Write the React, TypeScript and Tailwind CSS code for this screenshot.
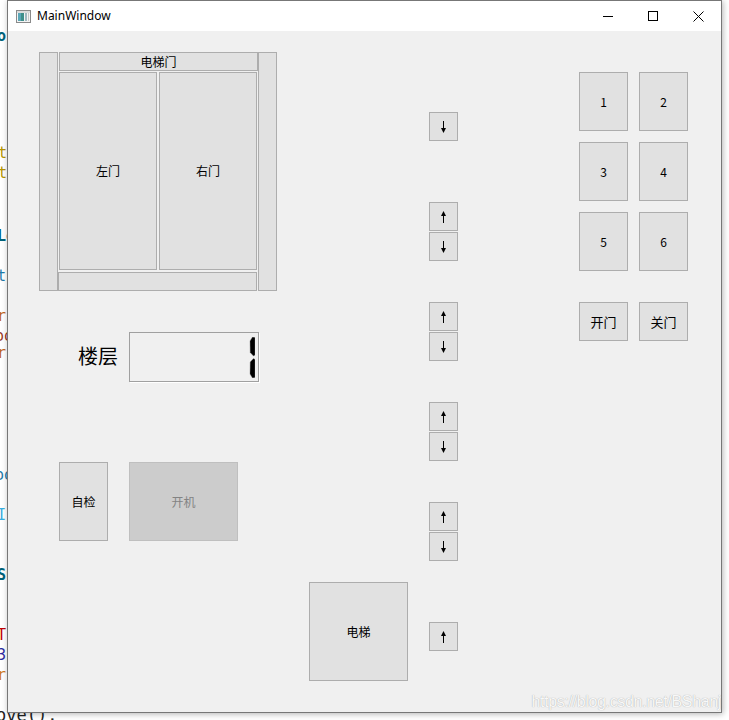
import React from "react";

function Btn({ className = "", children }: { className?: string; children?: React.ReactNode }) {
  return (
    <div
      className={
        "flex shrink-0 items-center justify-center border border-[#adadad] bg-[#e1e1e1] text-[12px] leading-none text-black " +
        className
      }
    >
      {children}
    </div>
  );
}

function ArrowUp() {
  return (
    <svg width="7" height="12" viewBox="0 0 7 12" shapeRendering="crispEdges">
      <rect x="3" y="2" width="1" height="10" fill="#000" />
      <polygon points="3.5,0 6,5 1,5" fill="#000" shapeRendering="geometricPrecision" />
    </svg>
  );
}

function ArrowDown() {
  return (
    <svg width="7" height="12" viewBox="0 0 7 12" shapeRendering="crispEdges">
      <rect x="3" y="0" width="1" height="10" fill="#000" />
      <polygon points="1,7 6,7 3.5,12" fill="#000" shapeRendering="geometricPrecision" />
    </svg>
  );
}

function Arrow({ up, className = "" }: { up?: boolean; className?: string }) {
  return <Btn className={"h-[29px] w-[29px] " + className}>{up ? <ArrowUp /> : <ArrowDown />}</Btn>;
}

function Digit1() {
  return (
    <svg width="6" height="41" viewBox="0 0 6 41">
      <polygon points="3.5,0 6,0.5 6,18 4.5,19 1.2,15.5 1,4" fill="#000" stroke="#777" strokeWidth="0.4" />
      <polygon points="4.5,21.5 6,22.5 6,40.5 3.5,41 1,37 1.2,25" fill="#000" stroke="#777" strokeWidth="0.4" />
    </svg>
  );
}

function WinIcon() {
  return (
    <svg width="15" height="13" viewBox="0 0 15 13">
      <rect x="0.5" y="0.5" width="14" height="12" fill="#f4f4f4" stroke="#8a8a8a" />
      <rect x="1" y="1" width="13" height="2" fill="#dcdcdc" />
      <rect x="2" y="3" width="6" height="8" fill="#3f8f8a" />
      <rect x="2" y="3" width="3" height="8" fill="#5aa7b8" />
      <rect x="9" y="3" width="2" height="8" fill="#9fb8c0" />
      <rect x="12" y="3" width="1" height="8" fill="#c8c8c8" />
    </svg>
  );
}

export default function App() {
  return (
    <div className="relative h-[720px] w-[729px] overflow-hidden bg-white font-['Noto_Sans_CJK_SC','Noto_Sans',sans-serif]">
      {/* background editor fragments */}
      <div className="absolute left-0 top-0 h-full w-[20px] font-['DejaVu_Sans_Mono',monospace] text-[15px] leading-none">
        <span className="absolute left-[-3px] top-[29px] font-bold text-[#00627a]">or</span>
        <span className="absolute left-[-2px] top-[146px] text-[#b59400]">ti</span>
        <span className="absolute left-[-2px] top-[166px] text-[#b59400]">ti</span>
        <span className="absolute left-[-3px] top-[229px] font-bold text-[#00627a]">Lo</span>
        <span className="absolute left-[-3px] top-[269px] text-[#1f7aa8]">tE</span>
        <span className="absolute left-[-3px] top-[309px] text-[#c0651c]">r</span>
        <span className="absolute left-[-5px] top-[329px] text-[#9a3b1f]">oo</span>
        <span className="absolute left-[-3px] top-[346px] text-[#c0651c]">r</span>
        <span className="absolute left-[-5px] top-[468px] text-[#1f7aa8]">oo</span>
        <span className="absolute left-[-3px] top-[508px] text-[#3aaee0]">I(</span>
        <span className="absolute left-[-3px] top-[568px] font-bold text-[#00627a]">Su</span>
        <span className="absolute left-[-3px] top-[628px] text-[#c00000]">T</span>
        <span className="absolute left-[-3px] top-[648px] text-[#2a2aa0]">3</span>
        <span className="absolute left-[-3px] top-[668px] text-[#d07a20]">r</span>
      </div>
      <span className="absolute left-[-4px] top-[707px] font-['DejaVu_Sans_Mono',monospace] text-[17px] leading-none text-[#222]">
        ove().
      </span>

      {/* window */}
      <div className="relative z-10 ml-[7px] flex h-[713px] w-[715px] flex-col border border-[#777777] shadow-[1px_1px_6px_rgba(0,0,0,0.3)]">
        {/* title bar */}
        <div className="flex h-[30px] shrink-0 items-center bg-white">
          <div className="ml-[8px] flex items-center">
            <WinIcon />
            <span className="ml-[6px] font-['Noto_Sans',sans-serif] text-[12px] text-black">MainWindow</span>
          </div>
          <div className="ml-auto flex h-full">
            <div className="flex h-full w-[46px] items-center justify-center">
              <div className="ml-[4px] h-[1px] w-[10px] bg-black" />
            </div>
            <div className="flex h-full w-[46px] items-center justify-center">
              <div className="ml-[2px] h-[10px] w-[10px] border border-black" />
            </div>
            <div className="flex h-full w-[46px] items-center justify-center">
              <svg width="11" height="11" viewBox="0 0 11 11" className="ml-[1px]">
                <path d="M0.5 0.5 L10.5 10.5 M10.5 0.5 L0.5 10.5" stroke="#000" strokeWidth="1" />
              </svg>
            </div>
          </div>
        </div>

        {/* client area */}
        <div className="flex flex-1 items-start bg-[#f0f0f0]">
          {/* column A */}
          <div className="ml-[31px] flex w-[238px] shrink-0 flex-col">
            <div className="mt-[21px] flex h-[239px]">
              <div className="h-full w-[19px] border border-[#adadad] bg-[#e1e1e1]" />
              <div className="flex w-[200px] flex-col">
                <Btn className="ml-[1px] h-[19px] w-[199px]">电梯门</Btn>
                <div className="ml-[1px] mt-[1px] flex gap-[2px]">
                  <Btn className="h-[198px] w-[98px]">左门</Btn>
                  <Btn className="h-[198px] w-[98px]">右门</Btn>
                </div>
                <div className="mt-[2px] h-[19px] w-[199px] border border-[#adadad] bg-[#e1e1e1]" />
              </div>
              <div className="h-full w-[19px] border border-[#adadad] bg-[#e1e1e1]" />
            </div>

            <div className="mt-[41px] flex items-center">
              <div className="w-[79px] pb-[2px] text-right text-[20px] leading-none text-black">楼层</div>
              <div className="ml-[11px] flex h-[50px] w-[130px] items-center justify-end border border-[#a0a0a0] pr-[3px] shadow-[1px_1px_0_#ffffff]">
                <Digit1 />
              </div>
            </div>

            <div className="mt-[80px] flex">
              <Btn className="ml-[20px] h-[79px] w-[49px]">自检</Btn>
              <div className="ml-[21px] flex h-[79px] w-[109px] items-center justify-center border border-[#bfbfbf] bg-[#cccccc] text-[12px] leading-none text-[#838383]">
                开机
              </div>
            </div>
          </div>

          {/* column B */}
          <Btn className="ml-[32px] mt-[551px] h-[99px] w-[99px]">电梯</Btn>

          {/* column C */}
          <div className="ml-[21px] flex w-[29px] shrink-0 flex-col">
            <Arrow className="mt-[81px]" />
            <Arrow up className="mt-[61px]" />
            <Arrow className="mt-[1px]" />
            <Arrow up className="mt-[41px]" />
            <Arrow className="mt-[1px]" />
            <Arrow up className="mt-[41px]" />
            <Arrow className="mt-[1px]" />
            <Arrow up className="mt-[41px]" />
            <Arrow className="mt-[1px]" />
            <Arrow up className="mt-[61px]" />
          </div>

          {/* column D */}
          <div className="ml-[121px] mt-[41px] flex shrink-0 flex-col">
            <div className="grid grid-cols-[49px_49px] gap-[11px]">
              <Btn className="h-[59px]">1</Btn>
              <Btn className="h-[59px]">2</Btn>
              <Btn className="h-[59px]">3</Btn>
              <Btn className="h-[59px]">4</Btn>
              <Btn className="h-[59px]">5</Btn>
              <Btn className="h-[59px]">6</Btn>
            </div>
            <div className="mt-[31px] flex gap-[11px]">
              <Btn className="h-[39px] w-[49px] text-[13px]">开门</Btn>
              <Btn className="h-[39px] w-[49px] text-[13px]">关门</Btn>
            </div>
          </div>
        </div>

        {/* watermark overlay */}
        <span className="pointer-events-none absolute bottom-[2px] right-[0px] font-['Liberation_Sans',sans-serif] text-[16px] leading-none tracking-[-0.35px] text-[#f8f8f8] [text-shadow:0_0_1px_#9a9a9a]">
          https://blog.csdn.net/BShanj
        </span>
      </div>
    </div>
  );
}
